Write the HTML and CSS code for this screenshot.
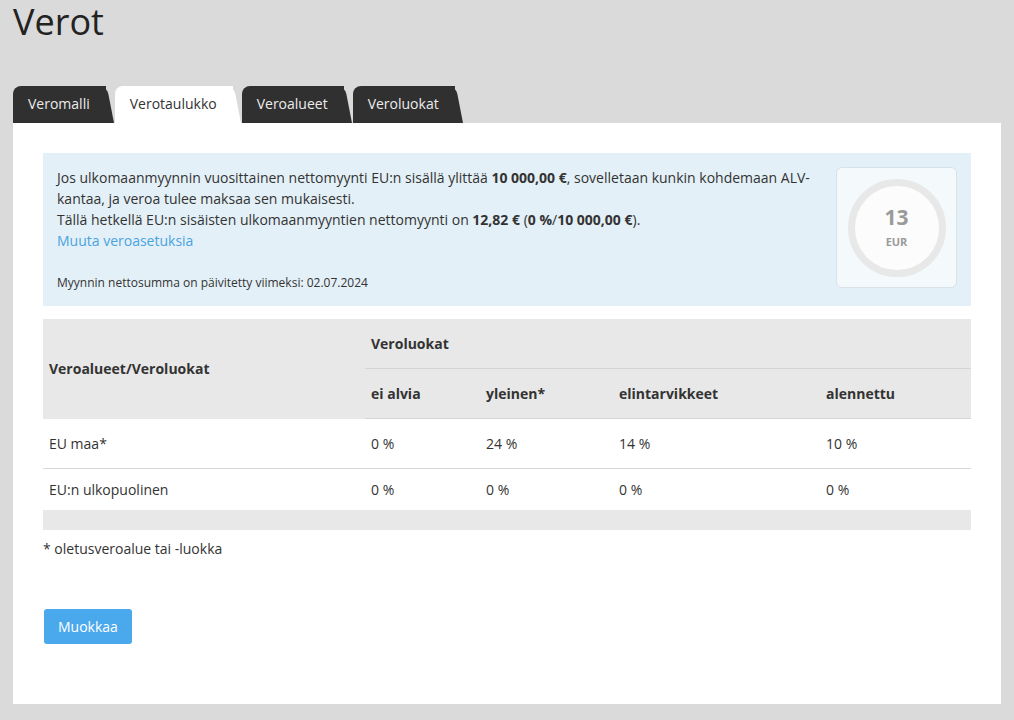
FILE: index.html
```html
<!DOCTYPE html>
<html lang="fi">
<head>
<meta charset="utf-8">
<title>Verot</title>
<link rel="stylesheet" href="styles.css">
</head>
<body>
<div class="page">
  <h1 class="title">Verot</h1>
  <nav class="tabs">
    <a class="tab">Veromalli</a>
    <a class="tab active">Verotaulukko</a>
    <a class="tab">Veroalueet</a>
    <a class="tab">Veroluokat</a>
  </nav>
  <main class="panel">
    <section class="info">
      <div class="info-text">
        <p class="info-main">Jos ulkomaanmyynnin vuosittainen nettomyynti EU:n sisällä ylittää <b>10 000,00 €</b>, sovelletaan kunkin kohdemaan ALV-kantaa, ja veroa tulee maksaa sen mukaisesti.<br>Tällä hetkellä EU:n sisäisten ulkomaanmyyntien nettomyynti on <b>12,82 €</b> (<b>0 %</b>/<b>10 000,00 €</b>).<br><a class="link">Muuta veroasetuksia</a></p>
        <p class="info-small">Myynnin nettosumma on päivitetty viimeksi: 02.07.2024</p>
      </div>
      <div class="gauge-card">
        <div class="gauge">
          <span class="gauge-value">13</span>
          <span class="gauge-unit">EUR</span>
        </div>
      </div>
    </section>
    <table class="tax-table">
      <colgroup>
        <col class="c1"><col class="c2"><col class="c3"><col class="c4"><col class="c5">
      </colgroup>
      <thead>
        <tr class="h1row">
          <th rowspan="2" class="corner">Veroalueet/Veroluokat</th>
          <th colspan="4" class="group">Veroluokat</th>
        </tr>
        <tr class="h2row">
          <th>ei alvia</th>
          <th>yleinen*</th>
          <th>elintarvikkeet</th>
          <th>alennettu</th>
        </tr>
      </thead>
      <tbody>
        <tr class="row">
          <td>EU maa*</td><td>0 %</td><td>24 %</td><td>14 %</td><td>10 %</td>
        </tr>
        <tr class="row last">
          <td>EU:n ulkopuolinen</td><td>0 %</td><td>0 %</td><td>0 %</td><td>0 %</td>
        </tr>
      </tbody>
      <tfoot>
        <tr class="foot"><td colspan="5"></td></tr>
      </tfoot>
    </table>
    <p class="footnote">* oletusveroalue tai -luokka</p>
    <button class="btn" type="button">Muokkaa</button>
  </main>
</div>
</body>
</html>
```
FILE: styles.css
```css
html, body {
  margin: 0;
  padding: 0;
  background: #dadada;
}
body {
  font-family: "Open Sans", "Liberation Sans", sans-serif;
  color: #333;
  font-size: 14px;
}
.page {
  padding: 0 13px 16px 13px;
}
.title {
  margin: 0;
  padding-left: 0;
  font-size: 36px;
  line-height: 44px;
  font-weight: 400;
  color: #222;
}
.tabs {
  display: flex;
  margin-top: 42px;
  height: 37px;
}
.tab {
  position: relative;
  display: block;
  height: 37px;
  line-height: 36px;
  padding: 0 16px 0 15px;
  margin-right: 9px;
  background: #303030;
  color: #ececec;
  border-radius: 8px 0 0 0;
  font-size: 14px;
  text-decoration: none;
}
.tab::after {
  content: "";
  position: absolute;
  top: 0;
  right: -8px;
  width: 16px;
  height: 100%;
  background: inherit;
  border-radius: 0 8px 0 0;
  transform: skewX(11deg);
  transform-origin: 0 100%;
  z-index: 0;
}
.tab.active {
  background: #fff;
  color: #333;
}
.panel {
  background: #fff;
  padding: 30px 30px 60px 30px;
}
.info {
  display: flex;
  background: #e3f0f7;
  padding: 14px;
  gap: 14px;
}
.info-text {
  flex: 1;
  display: flex;
  flex-direction: column;
}
.info-main {
  margin: 0;
  line-height: 21px;
}
.info-main b {
  font-weight: 700;
}
.link {
  color: #4aa3e0;
  text-decoration: none;
}
.info-small {
  margin: 23px 0 0 0;
  font-size: 12px;
  line-height: 18px;
}
.gauge-card {
  width: 119px;
  height: 119px;
  flex: none;
  background: #f4f9fc;
  border: 1px solid #d9e2e7;
  border-radius: 6px;
  display: flex;
  align-items: center;
  justify-content: center;
}
.gauge {
  width: 84px;
  height: 84px;
  border: 7px solid #e8e8e8;
  border-radius: 50%;
  background: #fcfcfc;
  display: flex;
  flex-direction: column;
  align-items: center;
  justify-content: center;
  color: #9a9a9a;
  font-weight: 700;
}
.gauge-value {
  font-size: 21px;
  line-height: 24px;
}
.gauge-unit {
  font-size: 11px;
  line-height: 16px;
  margin-top: 5px;
}
.tax-table {
  width: 100%;
  margin-top: 13px;
  border-collapse: collapse;
  table-layout: fixed;
}
.c1 { width: 322px; }
.c2 { width: 115px; }
.c3 { width: 133px; }
.c4 { width: 207px; }
.c5 { width: 151px; }
.tax-table th,
.tax-table td {
  padding: 0 6px;
  text-align: left;
  vertical-align: middle;
  font-size: 14px;
}
.tax-table th {
  font-weight: 700;
  background: #e8e8e8;
  color: #333;
}
.h1row th {
  height: 49px;
}
.h1row .group {
  border-bottom: 1px solid #d4d4d4;
}
.h2row th {
  height: 49px;
  border-bottom: 1px solid #d4d4d4;
}
.row td {
  height: 49px;
  border-bottom: 1px solid #d8d8d8;
}
.row.last td {
  height: 41px;
  border-bottom: none;
}
.foot td {
  height: 20px;
  background: #e8e8e8;
  padding: 0;
}
.footnote {
  margin: 8px 0 0 0;
  line-height: 21px;
}
.btn {
  margin: 50px 0 0 1px;
  height: 35px;
  padding: 0 14px;
  background: #4aa8ec;
  color: #fff;
  border: none;
  border-radius: 3px;
  font-family: "Open Sans", "Liberation Sans", sans-serif;
  font-size: 14px;
  cursor: pointer;
}
```
